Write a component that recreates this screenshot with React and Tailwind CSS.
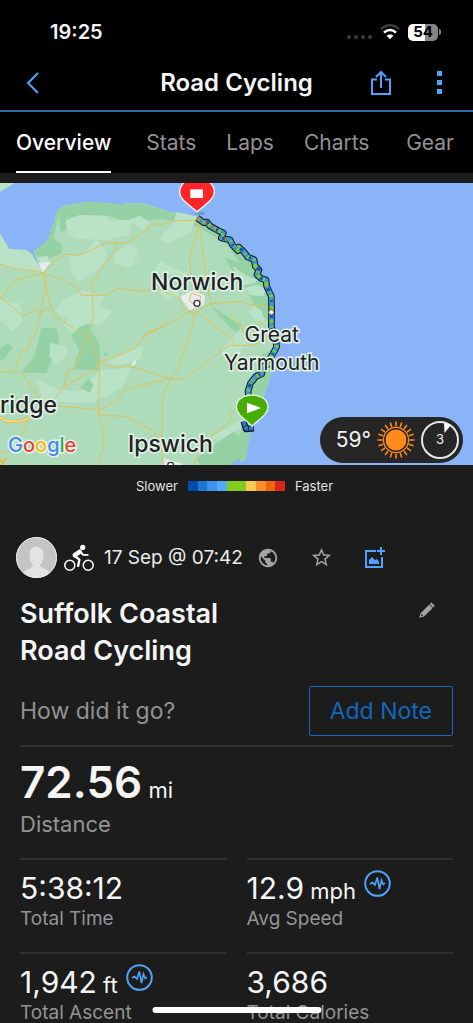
import React, { useState } from 'react';
import { MdPublic, MdStarBorder } from 'react-icons/md';

const tabs = [
  { name: 'Overview', className: 'mr-[5px]' },
  { name: 'Stats', className: '' },
  { name: 'Laps', className: '' },
  { name: 'Charts', className: '' },
  { name: 'Gear', className: 'ml-auto' },
];

const stats = [
  { value: '5:38:12', label: 'Total Time' },
  { value: '12.9', unit: 'mph', label: 'Avg Speed', chart: true },
  { value: '1,942', unit: 'ft', label: 'Total Ascent', chart: true },
  { value: '3,686', label: 'Total Calories' },
];

// Main roads of the region, in map units
const roads = [
  'M0 244 L45 257 L110 264 L130 270 L160 236 L195 214 L240 217 L322 178 L382 180 L465 121 L480 125 L530 113 L585 112 L597 120 L585 170 L568 228 L577 310',
  'M350 182 L347 200 L325 233 L312 239 L275 307 L281 400 L262 465',
  'M130 270 L225 308 L245 337 L320 337 L352 315 L420 324 L480 319 L535 345 L555 380 L580 393 L630 363 L719 355',
  'M130 270 L42 292 L0 350',
  'M0 340 L68 399 L100 384 L118 391 L152 370',
  'M130 270 L136 310 L120 400 L110 440 L82 500 L62 505 L50 545 L38 566 L0 566',
  'M130 270 L150 365 L165 399 L258 460 L300 530 L295 680 L310 750 L308 800 L292 846',
  'M262 465 L220 560 L202 562 L192 612 L165 645',
  'M192 612 L290 555 L300 530 L320 532 L408 495 L435 458 L470 441 L500 415',
  'M425 470 L440 450 L500 425 L580 380',
  'M580 393 L580 415 L565 470 L530 565 L512 587',
  'M300 530 L315 548 L350 553 L390 549 L512 587 L555 587 L660 507 L690 487 L760 487 L820 455',
  'M512 587 L375 619 L350 650 L298 682 L295 697 L380 700 L460 745 L482 780 L490 846',
  'M512 587 L486 645 L487 740 L480 770',
  'M580 380 L660 440 L695 470 L708 490',
  'M597 120 L620 300 L634 363',
  'M719 355 L760 367 L810 370',
  'M810 400 L765 440 L740 470 L719 420 L690 395',
  'M715 665 L695 690 L688 720 L640 755 L600 800 L580 846',
  'M42 566 L65 570 L130 660',
  'M165 668 L290 679',
  'M90 700 L70 745 L40 800 L0 810',
];

const routePath =
  'M592 105 L612 119 L621 117 L630 129 L655 143 L670 150 L664 165 L690 170 L697 185 L714 203 L716 192 L733 208 L743 222 L762 230 L766 250 L777 260 L771 275 L785 287 L798 291 L800 310 L814 340 L815 385 L814 430 L827 470 L830 492 L810 528 L810 542 L790 550 L785 573 L768 580 L752 600 L744 625 L746 650';

const legendColors = [
  'bg-[#004da5]',
  'bg-[#1f76d2]',
  'bg-[#3b93ee]',
  'bg-[#55a9fc]',
  'bg-[#82cb20]',
  'bg-[#82cb20]',
  'bg-[#fcca50]',
  'bg-[#fc8d2b]',
  'bg-[#ec680b]',
  'bg-[#d92420]',
];

function StatusBar() {
  return (
    <div className="flex h-14 items-end justify-between pr-[32px] pb-3 pl-[50px]">
      <span className="text-[20px] leading-6 font-semibold">19:25</span>
      <div className="flex h-6 items-center gap-2">
        <span className="flex gap-[3px] pt-[10px]">
          {[0, 1, 2, 3].map((dot) => (
            <span key={dot} className="h-1 w-1 rounded-full bg-[#3c3c3c]" />
          ))}
        </span>
        <svg viewBox="0 0 20 16" className="h-4 w-5" fill="none">
          <path d="M1 5.2 C6 0 14 0 19 5.2" stroke="#3c3c3c" strokeWidth="2.6" />
          <path d="M4 8.6 C7.5 5.2 12.5 5.2 16 8.6" stroke="#fff" strokeWidth="2.6" />
          <path d="M10 15.3 L6.6 11.8 C8.5 10 11.5 10 13.4 11.8 Z" fill="#fff" />
        </svg>
        <span className="flex items-center gap-px">
          <span className="flex h-[17px] w-[30px] items-center justify-center rounded-[5px] bg-linear-to-r from-white from-55% to-[#858585] to-55% text-[15px] leading-4 font-bold text-black">
            54
          </span>
          <span className="h-[6px] w-[2px] rounded-r-full bg-[#858585]" />
        </span>
      </div>
    </div>
  );
}

function Header() {
  return (
    <header className="grid h-[56px] grid-cols-[1fr_auto_1fr] items-center border-b-2 border-[#326ca8] px-5 pb-px">
      <button type="button" aria-label="Back" className="w-6 text-[#4ea4fb]">
        <svg viewBox="0 0 24 24" className="h-6 w-6" fill="none" stroke="currentColor" strokeWidth="2">
          <path d="M18 2 L8 12 L18 22" />
        </svg>
      </button>
      <h1 className="text-[24px] leading-8 font-semibold">Road Cycling</h1>
      <div className="flex items-center justify-end gap-[40px] pr-[8px] text-[#4ea4fb]">
        <button type="button" aria-label="Share">
          <svg viewBox="0 0 24 26" className="h-[26px] w-6" fill="none" stroke="currentColor" strokeWidth="2">
            <path d="M8 9.5 H3 V24 H21 V9.5 H16" />
            <path d="M12 18 V3 M7 7 L12 2 L17 7" />
          </svg>
        </button>
        <button type="button" aria-label="More" className="flex w-3 flex-col items-center gap-1">
          <span className="h-[5px] w-[5px] bg-current" />
          <span className="h-[5px] w-[5px] bg-current" />
          <span className="h-[5px] w-[5px] bg-current" />
        </button>
      </div>
    </header>
  );
}

function MapLabel({ className, children }) {
  return (
    <span
      className={`absolute text-center text-[#202124] [paint-order:stroke_fill] [-webkit-text-stroke:3px_#e4f3e8] ${className}`}
    >
      {children}
    </span>
  );
}

function RouteMap() {
  return (
    <section className="relative h-[282px] overflow-hidden bg-[#8ab4f8]" aria-label="Route map">
      <svg viewBox="0 0 1419 846" className="h-full w-full" preserveAspectRatio="xMinYMin slice">
        <path
          fill="#aedcba"
          d="M0 151 L27 198 L78 201 L95 212 L118 252 L102 204 L140 176 L165 111 L170 85 L190 68 L265 56 L358 64 L361 70 L370 60 L430 61 L510 86 L560 93 L590 101 L640 131 L700 180 L760 235 L790 285 L815 345 L820 420 L835 490 L805 600 L775 690 L755 735 L745 780 L738 830 L715 838 L690 849 L0 849 Z"
        />
        <path fill="#bae2c6" d="M0 0 H45 L0 26 Z" />
        {/* woods and coast */}
        <g fill="#94d2a5">
          <path d="M102 204 L140 176 L165 111 L170 85 L190 68 L265 56 L358 64 L361 70 L370 60 L430 61 L510 86 L590 101 L640 131 L700 180 L760 235 L790 285 L815 345 L818 415 L780 400 L745 330 L715 290 L672 222 L719 240 L680 185 L600 135 L530 113 L480 110 L430 112 L370 113 L320 98 L240 96 L198 112 L202 140 L180 148 L178 92 L160 165 L186 185 L186 210 L140 232 L112 222 Z" />
          <path d="M212 456 L262 426 L298 480 L300 562 L218 560 L238 500 Z" />
          <path d="M125 435 L170 436 L178 470 L140 570 L65 570 L105 515 Z" />
          <path d="M120 440 L155 434 L176 465 L145 480 Z M0 495 L25 481 L38 495 L10 530 L0 533 Z" />
          <path d="M630 365 L719 425 L719 450 L690 435 Z M655 508 L688 487 L719 510 Z M590 825 L700 745 L719 760 L777 520 L830 490 L805 600 L775 690 L755 735 L745 780 L738 830 L715 838 L690 849 L600 849 Z" />
          <path d="M310 506 L326 513 L318 522 Z M230 430 L268 425 L275 460 L240 470 Z" />
        </g>
        <g fill="#bae2c6">
          <path d="M0 151 L27 198 L78 201 L95 212 L118 252 L130 268 L40 258 L0 248 Z" />
          <path d="M198 112 L240 96 L320 98 L330 115 L395 110 L390 155 L325 170 L225 168 L200 140 Z M388 110 L420 98 L448 118 L430 145 Z M530 86 L590 101 L570 150 L500 180 L478 165 L520 120 Z" />
          <path d="M205 215 L240 220 L290 170 L320 205 L315 245 L240 296 L215 270 Z M340 210 L390 182 L415 200 L400 230 L420 235 L380 253 L345 240 Z" />
          <path d="M165 385 L190 350 L250 320 L312 340 L300 370 L342 385 L300 424 L260 420 L215 448 L190 425 L205 410 Z M0 350 L60 360 L68 415 L38 443 L0 410 Z" />
          <path d="M150 480 L202 490 L200 520 L170 545 L148 520 Z M110 590 L175 620 L240 625 L300 560 L392 555 L370 610 L320 640 L295 645 L280 660 L130 655 Z M320 530 L410 490 L430 495 L420 530 L345 550 Z" />
          <path d="M480 235 L465 260 L475 275 L560 277 L565 240 L545 210 L570 260 L550 270 Z M465 319 L530 310 L540 340 L500 350 Z M660 505 L719 440 L745 470 L710 520 Z" />
          <path d="M699 250 L735 275 L770 290 L765 300 L719 310 Z M735 315 L770 305 L800 318 L790 340 L750 335 Z M745 387 L765 370 L782 380 L800 420 L770 410 Z M630 765 L740 700 L738 725 L660 770 Z M115 222 L142 218 L150 240 L120 238 Z" />
        </g>
        <path d="M240 615 L265 586 L281 605 L270 630 Z" fill="#94d2a5" />
        <path d="M690 846 L719 825 V846 Z" fill="#8ab4f8" />
        <g fill="#e8eaed">
          <path d="M116 240 L154 236 L128 268 Z" />
          <path d="M543 340 L578 322 L615 338 L612 366 L570 382 L545 350 Z" />
          <path d="M490 826 L548 842 L548 849 L490 849 Z M393 545 L410 525 L408 540 L398 550 Z M805 410 L815 400 L815 425 Z" />
        </g>
        <g fill="none" stroke="#dfc15c" strokeWidth="3" strokeLinejoin="round">
          {roads.map((d) => (
            <path key={d} d={d} />
          ))}
          <path d="M575 330 L568 352 L582 365 L600 358 L602 340 Z" />
        </g>
        <path d="M0 703 L18 714 L60 716 L84 706" fill="none" stroke="#e8b84a" strokeWidth="9" />
        <path d="M0 703 L18 714 L60 716 L84 706" fill="none" stroke="#fde293" strokeWidth="4" />
        <path d="M0 828 L10 840 L20 825 M0 845 L12 849" fill="none" stroke="#e8b84a" strokeWidth="6" />
        <circle cx="591" cy="361" r="9" fill="#fff" stroke="#333" strokeWidth="4" />
        <circle cx="512" cy="847" r="9" fill="#fff" stroke="#333" strokeWidth="4" />

        {/* ride, coloured by pace */}
        <g fill="none" strokeLinejoin="round">
          <path d={routePath} stroke="#111820" strokeWidth="20" />
          <path d={routePath} stroke="#3f93df" strokeWidth="14" />
          <path d={routePath} stroke="#82cb20" strokeWidth="11" strokeDasharray="9 11 6 9 14 14 5 8" />
          <path d={routePath} stroke="#0d55ad" strokeWidth="10" strokeDasharray="6 37 10 29" strokeDashoffset="12" />
          <path d={routePath} stroke="#ec680b" strokeWidth="9" strokeDasharray="5 24 4 22 5 60 4 900" />
          <path d="M731 715 L738 738 L762 736" stroke="#111820" strokeWidth="19" />
          <path d="M731 715 L738 737 L760 736" stroke="#2d78ca" strokeWidth="12" strokeDasharray="14 2" />
        </g>
        <circle cx="814" cy="388" r="8" fill="#f8f8f8" stroke="#555" strokeWidth="3" />

        <ellipse cx="600" cy="91" rx="15" ry="5" fill="#4e7ba5" opacity=".5" />
        <path d="M591 87 C575 70 539 52 539 28 C539 -28 643 -28 643 28 C643 52 607 70 591 87 Z" fill="#ff2528" stroke="#f0f3ef" strokeWidth="4" />
        <rect x="571" y="19" width="38" height="26" fill="#fff" />
        <path d="M756 730 C742 712 709 697 709 672 C709 624 804 624 804 672 C804 697 770 712 756 730 Z" fill="#47ad05" stroke="#e6f4e4" strokeWidth="4" />
        <path d="M741 659 L783 675 L741 691 Z" fill="#fff" />
      </svg>
      <MapLabel className="top-[84px] left-[151px] text-[23px] leading-[30px] font-medium">Norwich</MapLabel>
      <MapLabel className="top-[138px] left-[224px] text-[21px] leading-[28px]">
        Great
        <br />
        Yarmouth
      </MapLabel>
      <MapLabel className="top-[207px] left-0 text-[23px] leading-[30px] font-medium">ridge</MapLabel>
      <MapLabel className="top-[246px] left-[128px] text-[23px] leading-[30px] font-medium">Ipswich</MapLabel>
      <MapLabel className="top-[248px] left-[8px] text-[20px] leading-[28px] font-medium">
        <span className="text-[#4285f4]">G</span>
        <span className="text-[#ea4335]">o</span>
        <span className="text-[#fbbc05]">o</span>
        <span className="text-[#4285f4]">g</span>
        <span className="text-[#34a853]">l</span>
        <span className="text-[#ea4335]">e</span>
      </MapLabel>
      <Weather />
    </section>
  );
}

function Weather() {
  const rays = Array.from({ length: 20 }, (_, i) => i * 18);
  return (
    <div className="absolute right-[10px] bottom-[2px] flex h-[46px] items-center gap-[6px] rounded-full bg-[#262626] pr-1 pl-4 text-[#f2f2f2]">
      <span className="text-[21px] leading-6">59°</span>
      <svg viewBox="0 0 38 38" className="h-[38px] w-[38px]" stroke="#ff8a1e">
        <circle cx="19" cy="19" r="10.5" fill="#ff8a1e" stroke="none" />
        <circle cx="19" cy="19" r="12.6" fill="none" strokeWidth="1.3" />
        {rays.map((angle) => (
          <path key={angle} d="M19 .5 V5.5" strokeWidth="1.6" transform={`rotate(${angle} 19 19)`} />
        ))}
      </svg>
      <span className="relative flex h-[38px] w-[38px] items-center justify-center rounded-full border-2 border-[#e6e6e6] text-[13px]">
        3
        <svg viewBox="0 0 8 11" className="absolute top-0 right-[6px] h-[11px] w-2" fill="#fff">
          <path d="M1 0 L8 2 L1.5 10 Z" />
        </svg>
      </span>
    </div>
  );
}

function Legend() {
  return (
    <div className="flex items-center justify-center gap-[10px] pt-3 pr-1 pb-[42px] text-[13px] leading-[18px] text-[#e4e4e4]">
      <span>Slower</span>
      <span className="flex h-[10px] w-[97px]">
        {legendColors.map((color, i) => (
          <span key={i} className={`flex-1 ${color}`} />
        ))}
      </span>
      <span>Faster</span>
    </div>
  );
}

function CyclistIcon() {
  return (
    <svg viewBox="0 0 30 28" className="ml-[7px] h-7 w-[30px] text-white" fill="none" stroke="currentColor">
      <circle cx="5.8" cy="21.2" r="5" strokeWidth="1.5" />
      <circle cx="24.2" cy="21.2" r="5" strokeWidth="1.5" />
      <circle cx="18.7" cy="3.4" r="2.6" fill="currentColor" stroke="none" />
      <path d="M10.8 11.2 L15.6 7.8" strokeWidth="4.6" strokeLinecap="round" strokeLinejoin="round" />
      <path d="M16.4 7.4 L19 10.9 H23.8" strokeWidth="1.8" strokeLinecap="round" strokeLinejoin="round" />
      <path d="M10.8 12 L15.4 15.6 L14.2 21.8" strokeWidth="2.4" strokeLinecap="round" strokeLinejoin="round" />
    </svg>
  );
}

function ActivityMeta() {
  return (
    <div className="flex items-center pl-4 text-[#a3a3a3]">
      <svg viewBox="0 0 41 41" className="h-[41px] w-[41px]">
        <circle cx="20.5" cy="20.5" r="20.5" fill="#c4c4c4" />
        <path d="M7 36 C10 31 17 32 17 28 C14 25 13.5 20 13.5 17 C13.5 7 27.5 7 27.5 17 C27.5 20 27 25 24 28 C24 32 31 31 34 36 C27 42 14 42 7 36 Z" fill="#e3e3e3" />
        <circle cx="20.5" cy="20.5" r="20" fill="none" stroke="#e8e8e8" />
      </svg>
      <CyclistIcon />
      <span className="ml-[10px] text-[19px] leading-6 text-[#ececec]">17 Sep @ 07:42</span>
      <button type="button" aria-label="Privacy" className="ml-[14px]">
        <MdPublic className="h-[22px] w-[22px]" />
      </button>
      <button type="button" aria-label="Favourite" className="ml-[31px]">
        <MdStarBorder className="h-[23px] w-[23px]" />
      </button>
      <button type="button" aria-label="Add photo" className="ml-[31px] text-[#4ea4fb]">
        <svg viewBox="0 0 22 22" className="h-[22px] w-[22px]" fill="none" stroke="currentColor" strokeWidth="2">
          <path d="M12 4 H2 V20 H18 V10" />
          <path d="M17 0 V8 M13 4 H21" />
          <path d="M5 17 V13 L8 10 L11 13 L13 12 L15 15 V17 Z" fill="currentColor" stroke="none" />
        </svg>
      </button>
    </div>
  );
}

function ChartBadge() {
  return (
    <svg viewBox="0 0 27 27" className="h-[27px] w-[27px]" fill="none" stroke="#4ea4fb" strokeWidth="2">
      <circle cx="13.5" cy="13.5" r="12.3" />
      <path d="M6 14 L8.5 12.5 L11 15 L13.3 7.5 L15.5 19 L17.5 10 L19.2 14.5 L21 13" strokeWidth="1.6" />
    </svg>
  );
}

function Stat({ value, unit, label, chart }) {
  return (
    <div className="border-t-2 border-[#303030] pt-[10px] pb-[20px]">
      <div className="flex h-9 items-start gap-2">
        <p className="text-[30px] leading-9">
          {value}
          {unit && <span className="text-[22px]"> {unit}</span>}
        </p>
        {chart && (
          <button type="button" aria-label={`${label} chart`}>
            <ChartBadge />
          </button>
        )}
      </div>
      <p className="text-[19px] leading-[26px] text-[#949494]">{label}</p>
    </div>
  );
}

export default function App() {
  const [activeTab, setActiveTab] = useState('Overview');

  return (
    <div className="relative flex h-screen flex-col overflow-hidden bg-[#1c1c1c] font-['Inter',sans-serif] text-[#f5f5f5]">
      <div className="bg-black">
        <StatusBar />
        <Header />
        <nav className="flex h-[61px] gap-[30px] pr-[19px] pl-4">
          {tabs.map((tab) => (
            <button
              key={tab.name}
              type="button"
              onClick={() => setActiveTab(tab.name)}
              className={`border-b-2 pt-[2px] text-[21px] leading-6 ${tab.className} ${
                activeTab === tab.name ? 'border-white font-medium text-white' : 'border-transparent text-[#929292]'
              }`}
            >
              {tab.name}
            </button>
          ))}
        </nav>
      </div>

      <main className="flex-1 overflow-y-auto pt-[10px] [scrollbar-width:none]">
        <RouteMap />
        <Legend />
        <ActivityMeta />

        <div className="px-5">
          <div className="flex items-start justify-between pt-[17px] pr-[17px]">
            <h2 className="w-60 text-[27px] leading-[37px] font-semibold">Suffolk Coastal Road Cycling</h2>
            <button type="button" aria-label="Edit name" className="mt-[6px] text-[#a3a3a3]">
              <svg viewBox="0 0 18 18" className="h-[18px] w-[18px]" fill="currentColor">
                <path d="M13.5 1.5 L16.8 4.8 L15.2 6.4 L11.9 3.1 Z M11.4 3.6 L14.7 6.9 L6 15.6 L1.2 16.8 L2.5 12.2 Z M3.6 13 L2.9 15.2 L5.2 14.6 Z" fillRule="evenodd" />
              </svg>
            </button>
          </div>

          <div className="mt-[17px] flex items-center justify-between">
            <p className="text-[23px] leading-8 text-[#929292]">How did it go?</p>
            <button
              type="button"
              className="h-[50px] rounded-[2px] border border-[#1567bd] px-5 text-[23px] text-[#1567bd]"
            >
              Add Note
            </button>
          </div>

          <div className="mt-[9px] border-t-2 border-[#303030] pt-[15px] pb-5">
            <p className="text-[44px] leading-[40px] font-semibold">
              72.56<span className="text-[22px] font-normal"> mi</span>
            </p>
            <p className="text-[22px] leading-7 text-[#949494]">Distance</p>
          </div>

          <div className="grid grid-cols-2 gap-x-5">
            {stats.map((stat) => (
              <Stat key={stat.label} {...stat} />
            ))}
          </div>
        </div>
      </main>

      <div className="absolute bottom-[10px] left-1/2 h-[6px] w-[169px] -translate-x-1/2 rounded-full bg-white" />
    </div>
  );
}
